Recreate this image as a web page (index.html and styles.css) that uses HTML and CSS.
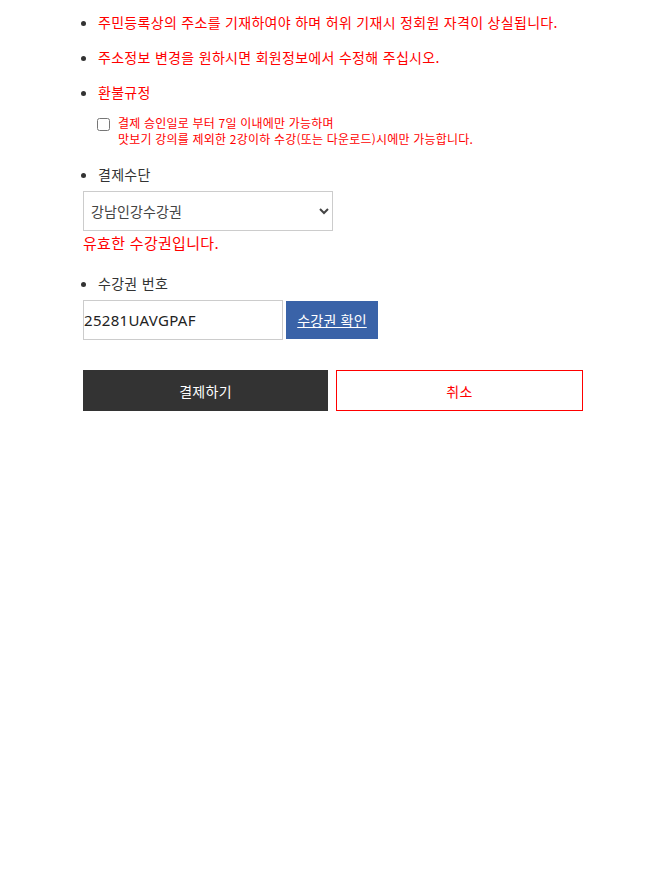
FILE: index.html
```html
<!DOCTYPE html>
<html lang="ko">
<head>
<meta charset="utf-8">
<link rel="stylesheet" href="styles.css">
</head>
<body>
<div class="wrap">
  <ul class="notes">
    <li><span class="red">주민등록상의 주소를 기재하여야 하며 허위 기재시 정회원 자격이 상실됩니다.</span></li>
    <li><span class="red">주소정보 변경을 원하시면 회원정보에서 수정해 주십시오.</span></li>
    <li><span class="red">환불규정</span>
      <label class="agree">
        <input type="checkbox" class="chk">
        <span class="agree-text">결제 승인일로 부터 7일 이내에만 가능하며<br>맛보기 강의를 제외한 2강이하 수강(또는 다운로드)시에만 가능합니다.</span>
      </label>
    </li>
    <li class="field-label">결제수단</li>
  </ul>
  <select class="sel">
    <option>강남인강수강권</option>
  </select>
  <p class="valid">유효한 수강권입니다.</p>
  <ul class="notes">
    <li class="field-label">수강권 번호</li>
  </ul>
  <div class="coupon-row">
    <input type="text" class="coupon" value="25281UAVGPAF">
    <a class="check-btn" href="#">수강권 확인</a>
  </div>
  <div class="actions">
    <button class="pay">결제하기</button>
    <button class="cancel">취소</button>
  </div>
</div>
</body>
</html>
```

FILE: styles.css
```css
html, body {
  margin: 0;
  padding: 0;
  background: #fff;
}
body {
  font-family: "Noto Sans CJK KR", "Noto Sans", sans-serif;
  color: #333;
}
.wrap {
  width: 500px;
  margin-left: 83px;
  padding-top: 12px;
}
.notes {
  margin: 0;
  padding-left: 15px;
  list-style: disc;
}
.notes li {
  font-size: 14px;
  line-height: 20px;
  margin-bottom: 15px;
  letter-spacing: 0.3px;
}
.red {
  color: #ff0000;
}
.agree {
  display: flex;
  align-items: flex-start;
  margin-top: 13px;
  margin-left: -1px;
}
.chk {
  width: 13px;
  height: 13px;
  margin: 3px 8px 0 0;
  flex: none;
}
.agree-text {
  color: #ff0000;
  font-size: 12px;
  line-height: 16px;
  letter-spacing: 0.2px;
}
.notes li.field-label {
  color: #333;
  margin-bottom: 7px;
}
.notes li:nth-child(3) {
  margin-bottom: 17px;
}
.sel {
  display: block;
  width: 250px;
  height: 40px;
  border: 1px solid #ccc;
  background: #fff;
  font-family: "Noto Sans CJK KR", sans-serif;
  font-size: 14px;
  color: #444;
  padding: 0 3px;
  margin: 0;
  border-radius: 0;
  letter-spacing: 0.1px;
}
.valid {
  margin: 2px 0 20px;
  color: #ff0000;
  font-size: 15px;
  line-height: 20px;
  letter-spacing: 0.3px;
}
.coupon-row {
  display: flex;
  align-items: flex-start;
  gap: 3px;
}
.coupon {
  width: 200px;
  height: 40px;
  box-sizing: border-box;
  border: 1px solid #ccc;
  padding: 0;
  margin: 0;
  font-family: "Noto Sans", sans-serif;
  font-size: 15px;
  color: #222;
  outline: none;
  letter-spacing: 0.3px;
}
.check-btn {
  display: flex;
  align-items: center;
  justify-content: center;
  width: 92px;
  height: 38px;
  margin-top: 1px;
  background: #3a63a8;
  color: #fff;
  font-size: 14px;
  text-decoration: underline;
  letter-spacing: 0.2px;
}
.actions {
  display: flex;
  gap: 8px;
  margin-top: 30px;
}
.actions button {
  height: 41px;
  font-family: "Noto Sans CJK KR", sans-serif;
  font-size: 14px;
  border-radius: 0;
  margin: 0;
  cursor: pointer;
  letter-spacing: 0.3px;
}
.pay {
  width: 245px;
  background: #333;
  color: #fff;
  border: none;
}
.cancel {
  width: 247px;
  background: #fff;
  color: #ff0000;
  border: 1px solid #ff0000;
}
```
